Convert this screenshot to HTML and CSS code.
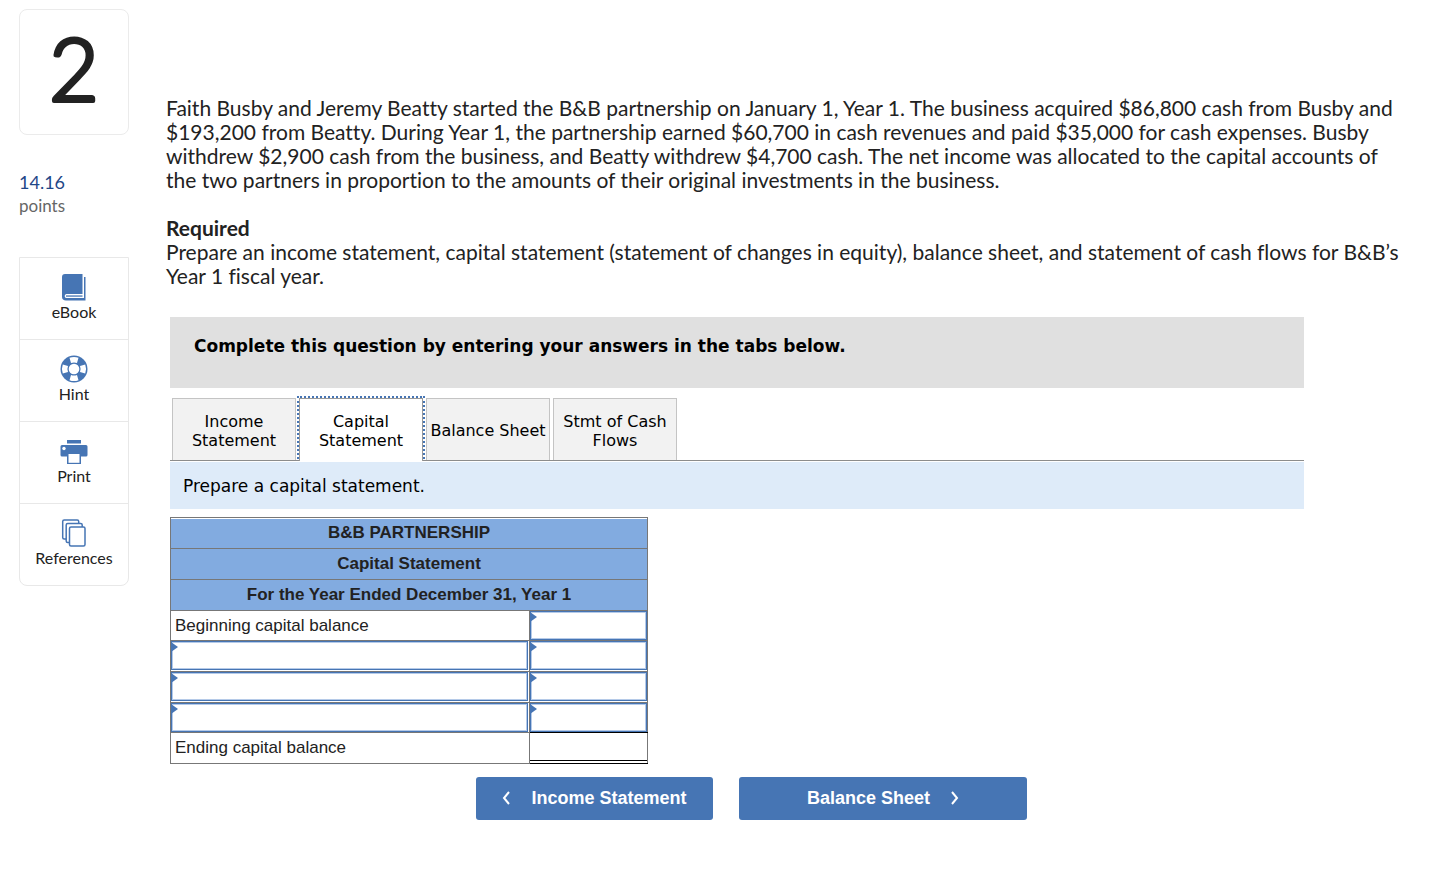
FILE: index.html
```html
<!DOCTYPE html>
<html lang="en">
<head>
<meta charset="utf-8">
<title>Question 2</title>
<meta name="viewport" content="width=device-width, initial-scale=1">
<link rel="stylesheet" href="styles.css">
</head>
<body>
<div class="page">
  <aside class="sidebar">
    <div class="number"><svg class="number-art" viewBox="0 0 108 124" role="img" aria-label="Question 2"><text x="54" y="91" text-anchor="middle">2</text></svg></div>
    <div class="points"><span class="points-value">14.16</span><span class="points-label">points</span></div>
    <nav class="tools" aria-label="Resources">
      <button class="tool" type="button">
        <svg class="tool-icon" viewBox="0 0 28 28" aria-hidden="true"><path fill="#4675b4" d="M5 1h17.500v20H6.500c-2.300 0-2.300 4 0 4H24V4h1.500v23.500H6c-2.500 0-4-1.500-4-3.500V4c0-2 1-3 3-3z"/><path fill="#4675b4" d="M6 22.400h16.500v1.300H6z"/></svg>
        <span>eBook</span>
      </button>
      <button class="tool" type="button">
        <svg class="tool-icon" viewBox="0 0 28 28" aria-hidden="true"><circle cx="14" cy="14" r="13.500" fill="#4675b4"/><path fill="#fff" d="M9.500 2.800Q14 1 18.500 2.800L17 8Q14 6.800 11 8zM9.500 25.200Q14 27 18.500 25.200L17 20Q14 21.200 11 20zM2.800 9.500Q1 14 2.800 18.500L8 17Q6.800 14 8 11zM25.200 9.500Q27 14 25.200 18.500L20 17Q21.200 14 20 11z"/><circle cx="14" cy="14" r="5.300" fill="#fff"/></svg>
        <span>Hint</span>
      </button>
      <button class="tool" type="button">
        <svg class="tool-icon" viewBox="0 0 28 28" aria-hidden="true"><path fill="#4675b4" d="M7 3h14v3.500H7zM2 8h24q1.500 0 1.500 1.500V18q0 1.500-1.500 1.500h-5V27H7v-7.500H2Q.5 19.500.5 18V9.500Q.5 8 2 8z"/><path fill="#fff" d="M8.500 17h11v8.800h-11z"/><circle cx="4" cy="11.500" r="1.700" fill="#fff"/></svg>
        <span>Print</span>
      </button>
      <button class="tool" type="button">
        <svg class="tool-icon" viewBox="0 0 28 28" aria-hidden="true"><g fill="#fff" stroke="#4675b4" stroke-width="1.500"><rect x="2.700" y="1" width="16" height="19" rx="1.500"/><rect x="6.200" y="4.500" width="16" height="19" rx="1.500"/><rect x="9.500" y="8" width="15.500" height="19" rx="1.500"/></g></svg>
        <span>References</span>
      </button>
    </nav>
  </aside>
  <main class="main">
    <div class="prompt">
      <p>Faith Busby and Jeremy Beatty started the B&amp;B partnership on January 1, Year 1. The business acquired $86,800 cash from Busby and<br>$193,200 from Beatty. During Year 1, the partnership earned $60,700 in cash revenues and paid $35,000 for cash expenses. Busby<br>withdrew $2,900 cash from the business, and Beatty withdrew $4,700 cash. The net income was allocated to the capital accounts of<br>the two partners in proportion to the amounts of their original investments in the business.</p>
      <h2>Required</h2>
      <p>Prepare an income statement, capital statement (statement of changes in equity), balance sheet, and statement of cash flows for B&amp;B’s<br>Year 1 fiscal year.</p>
    </div>
    <section class="worksheet">
      <div class="banner">Complete this question by entering your answers in the tabs below.</div>
      <div class="tabs" role="tablist">
        <button class="tab" role="tab" type="button">Income<br>Statement</button>
        <button class="tab tab-active" role="tab" type="button" aria-selected="true">Capital<br>Statement</button>
        <button class="tab" role="tab" type="button">Balance Sheet</button>
        <button class="tab" role="tab" type="button">Stmt of Cash<br>Flows</button>
      </div>
      <div class="instruction">Prepare a capital statement.</div>
      <table class="sheet">
        <colgroup><col class="col-label"><col class="col-amount"></colgroup>
        <thead>
          <tr><th class="first" colspan="2">B&amp;B PARTNERSHIP</th></tr>
          <tr><th colspan="2">Capital Statement</th></tr>
          <tr><th colspan="2">For the Year Ended December 31, Year 1</th></tr>
        </thead>
        <tbody>
          <tr class="short"><td class="label">Beginning capital balance</td><td><div class="entry"><input type="text" aria-label="Beginning capital balance"></div></td></tr>
          <tr><td><div class="entry entry-wide"><input type="text" aria-label="Item 1"></div></td><td><div class="entry"><input type="text" aria-label="Amount 1"></div></td></tr>
          <tr><td><div class="entry entry-wide"><input type="text" aria-label="Item 2"></div></td><td><div class="entry"><input type="text" aria-label="Amount 2"></div></td></tr>
          <tr class="short"><td><div class="entry entry-wide"><input type="text" aria-label="Item 3"></div></td><td class="above-total"><div class="entry"><input type="text" aria-label="Amount 3"></div></td></tr>
          <tr><td class="label">Ending capital balance</td><td class="total"></td></tr>
        </tbody>
      </table>
      <div class="pager">
        <button class="step step-back" type="button"><svg class="chevron" viewBox="0 0 8 14" aria-hidden="true"><path d="M7 1 2 7l5 6"/></svg>Income Statement</button>
        <button class="step step-next" type="button">Balance Sheet<svg class="chevron" viewBox="0 0 8 14" aria-hidden="true"><path d="m1 1 5 6-5 6"/></svg></button>
      </div>
    </section>
  </main>
</div>
</body>
</html>
```
FILE: styles.css
```css
* { box-sizing: border-box; }
body { margin: 0; background: #fff; color: #222; font-family: Lato, sans-serif; font-variant-ligatures: none; }
button { font: inherit; color: inherit; cursor: pointer; }
.page { display: flex; align-items: flex-start; gap: 37px; padding: 9px 0 24px 19px; }
.sidebar { flex: 0 0 110px; }
.number { border: 1px solid #ebebeb; border-radius: 8px; }
.number-art { display: block; width: 100%; font-size: 86px; font-weight: 300; fill: #222; stroke: #222; stroke-width: 4; stroke-linejoin: round; }
.points { display: flex; flex-direction: column; margin: 36px 0 40px; line-height: 23px; }
.points-value { color: #1f4788; font-size: 18px; }
.points-label { color: #666; font-size: 17px; }
.tools { border: 1px solid #e8e8e8; border-radius: 0 0 8px 8px; }
.tool { display: flex; flex-direction: column; align-items: center; width: 100%; height: 81px; padding: 15px 0 0; border: 0; background: none; font-size: 16px; line-height: 22px; }
.tool + .tool { height: 82px; border-top: 1px solid #e8e8e8; }
.tool-icon { width: 28px; height: 28px; }
.main { flex: 1; min-width: 0; padding-top: 87px; }
.prompt { font-size: 21px; line-height: 24px; }
.prompt p, .prompt h2 { margin: 0; }
.prompt h2 { margin-top: 24px; font-size: 21px; line-height: 24px; }
.worksheet { max-width: 1138px; margin-top: 29px; padding-left: 4px; }
.banner { height: 71px; padding: 18px 24px; background: #e0e0e0; color: #000; font: bold 17px/22px Verdana, "DejaVu Sans", sans-serif; }
.tabs { display: flex; gap: 3px; margin-top: 10px; padding-left: 2px; border-bottom: 1px solid #8c8c8c; }
.tab { width: 124px; height: 62px; padding: 2px 0 0; border: 1px solid #c4c4c4; border-bottom: 0; background: #f2f2f2; color: #000; font: 16px/19px Verdana, "DejaVu Sans", sans-serif; white-space: nowrap; }
.tab-active { height: 63px; margin-bottom: -1px; border-color: #999; background: #fff; outline: 2px dotted #4675b4; clip-path: inset(-2px -2px 0); }
.instruction { margin-top: 1px; padding: 13px 13px 11px; background: #deebf9; color: #000; font: 17px/23px Verdana, "DejaVu Sans", sans-serif; }
.sheet { width: 478px; margin-top: 8px; border-collapse: collapse; table-layout: fixed; font: 17px/20px "Liberation Sans", Arial, sans-serif; }
.col-label { width: 359px; }
.sheet th, .sheet td { height: 31px; padding: 0; border: 1px solid #777; }
.sheet .short td { height: 30px; }
.sheet td { vertical-align: top; }
.sheet th { background: #82abe0; }
.sheet th.first { box-shadow: inset 0 1px #fff; }
.sheet .label { padding: 5px 0 0 4px; }
.sheet .above-total { border-bottom-color: #000; }
.sheet .total { border-top-color: #000; border-bottom-color: #000; box-shadow: inset 0 -2px #fff, inset 0 -3px #000; }
.entry { position: relative; height: 29px; }
.entry-wide { padding-right: 1px; }
.entry input { display: block; width: 100%; height: 29px; padding: 0 8px; border: 1px solid #4675b4; box-shadow: inset 0 0 0 1px #b5cae8; font: inherit; }
.entry::before { content: ""; position: absolute; top: 1px; left: 0; border: solid transparent; border-width: 5px 0 5px 7px; border-left-color: #4675b4; }
.pager { display: flex; justify-content: center; gap: 26px; margin-top: 13px; padding-left: 29px; }
.step { display: flex; align-items: center; justify-content: center; gap: 21px; height: 43px; padding: 0 6px 2px; border: 0; border-radius: 3px; background: #4675b4; color: #fff; font: bold 18px/22px "Liberation Sans", Arial, sans-serif; }
.step-back { width: 237px; }
.step-next { width: 288px; }
.chevron { width: 8px; height: 14px; fill: none; stroke: #fff; stroke-width: 2; }
```
